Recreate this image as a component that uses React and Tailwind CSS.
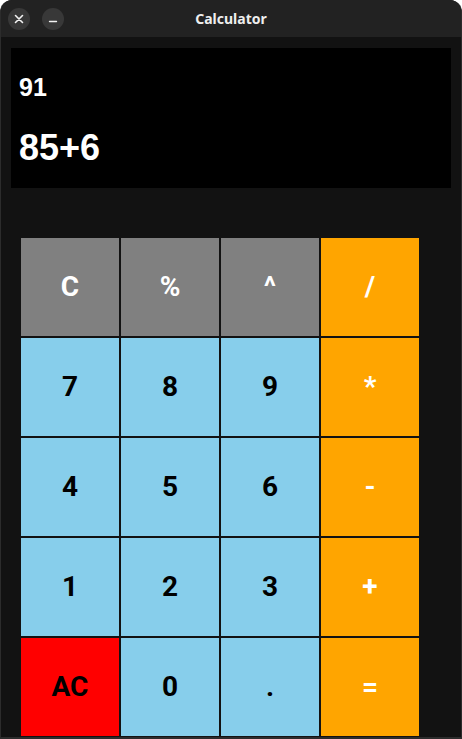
import React from "react";

const keys = [
  { label: "C", cls: "bg-[#808080] text-white" },
  { label: "%", cls: "bg-[#808080] text-white" },
  { label: "^", cls: "bg-[#808080] text-white" },
  { label: "/", cls: "bg-[#ffa500] text-white" },
  { label: "7", cls: "bg-[#87ceeb] text-black" },
  { label: "8", cls: "bg-[#87ceeb] text-black" },
  { label: "9", cls: "bg-[#87ceeb] text-black" },
  { label: "*", cls: "bg-[#ffa500] text-white" },
  { label: "4", cls: "bg-[#87ceeb] text-black" },
  { label: "5", cls: "bg-[#87ceeb] text-black" },
  { label: "6", cls: "bg-[#87ceeb] text-black" },
  { label: "-", cls: "bg-[#ffa500] text-white" },
  { label: "1", cls: "bg-[#87ceeb] text-black" },
  { label: "2", cls: "bg-[#87ceeb] text-black" },
  { label: "3", cls: "bg-[#87ceeb] text-black" },
  { label: "+", cls: "bg-[#ffa500] text-white" },
  { label: "AC", cls: "bg-[#ff0000] text-black" },
  { label: "0", cls: "bg-[#87ceeb] text-black" },
  { label: ".", cls: "bg-[#87ceeb] text-black" },
  { label: "=", cls: "bg-[#ffa500] text-white" },
];

const App = () => {
  return (
    <div className="w-[462px] h-[739px] bg-white">
      <div className="w-full h-full flex flex-col rounded-t-[12px] overflow-hidden bg-[#121212] border-x border-b-2 border-[#2c2c2c]">
        {/* barra de titulo */}
        <div className="h-[37px] shrink-0 bg-[#222222] relative flex items-center justify-center">
          <div className="absolute left-[7px] top-[8px] flex gap-[12px]">
            <div className="w-[22px] h-[22px] rounded-full bg-[#383838] flex items-center justify-center">
              <svg width="10" height="10" viewBox="0 0 10 10">
                <path d="M1.5 1.5 L8.5 8.5 M8.5 1.5 L1.5 8.5" stroke="#f2f2f2" strokeWidth="1.6" strokeLinecap="round" />
              </svg>
            </div>
            <div className="w-[22px] h-[22px] rounded-full bg-[#383838] flex items-center justify-center">
              <svg width="10" height="10" viewBox="0 0 10 10">
                <path d="M1.5 7.5 L8.5 7.5" stroke="#f2f2f2" strokeWidth="1.4" strokeLinecap="round" />
              </svg>
            </div>
          </div>
          <span className="text-[14px] font-bold text-[#eeeeee] font-['Noto_Sans',sans-serif]">Calculator</span>
        </div>

        {/* pantalla */}
        <div className="mx-[10px] mt-[11px] h-[140px] bg-black px-[8px] pt-[27px] flex flex-col font-['Liberation_Sans',Arial,sans-serif] font-bold text-white">
          <div className="text-[25px] leading-none">91</div>
          <div className="text-[36px] leading-none mt-[30px]">85+6</div>
        </div>

        {/* teclado */}
        <div className="ml-[20px] mt-[50px] grid grid-cols-[repeat(4,98px)] auto-rows-[98px] gap-[2px] font-['Roboto',sans-serif] font-bold">
          {keys.map((k) => (
            <button key={k.label} className={`${k.cls} flex items-center justify-center text-[28px] leading-none`}>
              {k.label}
            </button>
          ))}
        </div>
      </div>
    </div>
  );
};

export default App;
